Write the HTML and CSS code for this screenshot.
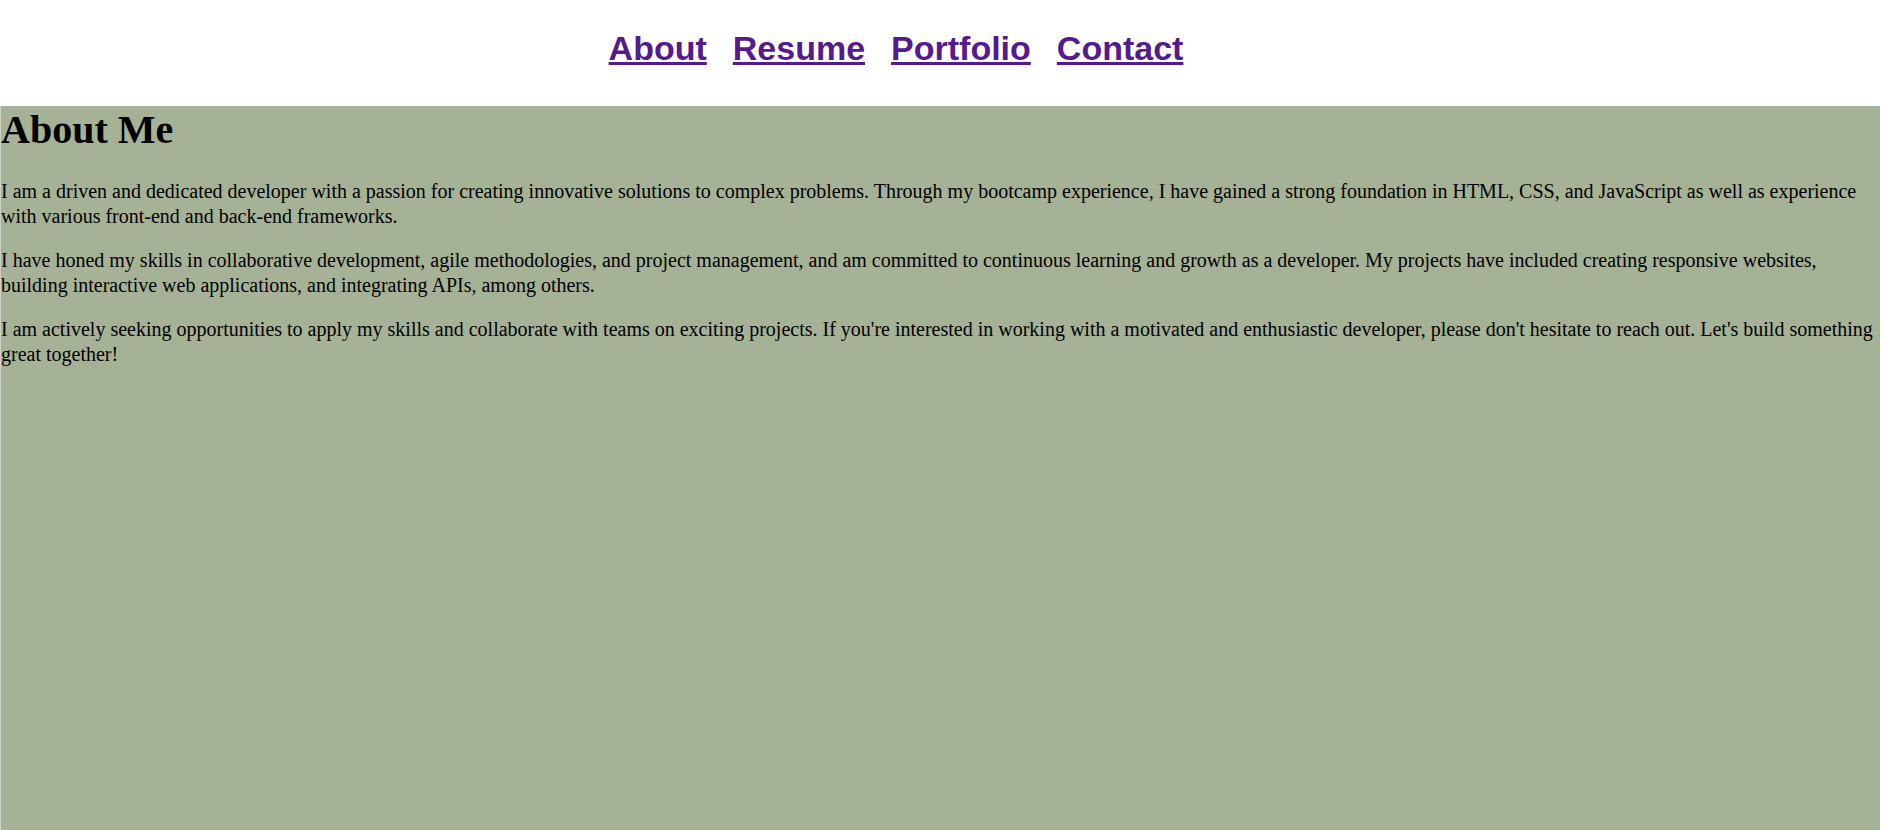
FILE: index.html
```html
<!DOCTYPE html>
<html lang="en">
<head>
<meta charset="utf-8">
<title>About Me</title>
<link rel="stylesheet" href="styles.css">
</head>
<body>
<header class="site-header">
  <nav class="nav">
    <a class="nav-link" href="#about">About</a>
    <a class="nav-link" href="#resume">Resume</a>
    <a class="nav-link" href="#portfolio">Portfolio</a>
    <a class="nav-link" href="#contact">Contact</a>
  </nav>
</header>
<main class="about" id="about">
  <h1 class="about-title">About Me</h1>
  <p class="about-text">I am a driven and dedicated developer with a passion for creating innovative solutions to complex problems. Through my bootcamp experience, I have gained a strong foundation in HTML, CSS, and JavaScript as well as experience with various front-end and back-end frameworks.</p>
  <p class="about-text">I have honed my skills in collaborative development, agile methodologies, and project management, and am committed to continuous learning and growth as a developer. My projects have included creating responsive websites, building interactive web applications, and integrating APIs, among others.</p>
  <p class="about-text">I am actively seeking opportunities to apply my skills and collaborate with teams on exciting projects. If you're interested in working with a motivated and enthusiastic developer, please don't hesitate to reach out. Let's build something great together!</p>
</main>
</body>
</html>
```

FILE: styles.css
```css
html, body {
  margin: 0;
  padding: 0;
  background: #ffffff;
}

body {
  font-family: "Liberation Serif", "Times New Roman", serif;
  font-size: 20px;
  color: #000000;
}

.site-header {
  box-sizing: border-box;
  height: 106px;
  padding-top: 29px;
}

.nav {
  display: flex;
  justify-content: center;
  gap: 26px;
  padding-right: 90px;
}

.nav-link {
  font-family: "Liberation Sans", Arial, sans-serif;
  font-weight: bold;
  font-size: 34px;
  color: #551a8b;
  text-decoration: underline;
  text-decoration-thickness: 3px;
}

.about {
  box-sizing: border-box;
  margin-right: 2px;
  min-height: calc(100vh - 106px);
  background: #a5b295;
  border-left: 1px solid #cdd4c5;
  padding: 0 0 1px 0;
}

.about-title {
  margin: 0 0 26px 0;
  font-size: 40px;
  font-weight: bold;
}

.about-text {
  margin: 0 0 20px 0;
  line-height: 24.5px;
}
```
